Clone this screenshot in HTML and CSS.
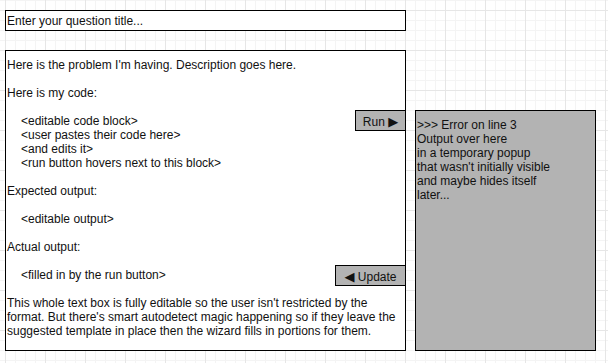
FILE: index.html
```html
<!DOCTYPE html>
<html lang="en">

<head>
  <meta charset="UTF-8">
  <meta name="viewport" content="width=device-width, initial-scale=1.0">
  <title>Question wizard</title>
  <link rel="stylesheet" href="styles.css">
</head>

<body>
  <div class="canvas">
    <div class="editor">
      <div class="title-box">Enter your question title...</div>

      <div class="question-box">
        <p class="block">Here is the problem I'm having. Description goes here.</p>
        <p class="block">Here is my code:</p>
        <div class="block indent">
          <p>&lt;editable code block&gt;</p>
          <p>&lt;user pastes their code here&gt;</p>
          <p>&lt;and edits it&gt;</p>
          <p>&lt;run button hovers next to this block&gt;</p>
        </div>
        <p class="block">Expected output:</p>
        <p class="block indent">&lt;editable output&gt;</p>
        <p class="block">Actual output:</p>
        <p class="block indent">&lt;filled in by the run button&gt;</p>
        <p class="block">This whole text box is fully editable so the user isn't restricted by the format. But there's
          smart autodetect magic happening so if they leave the suggested template in place then the wizard fills in
          portions for them.</p>

        <button class="btn" id="run-btn">Run <span class="arrow">&#9654;</span></button>
        <button class="btn" id="update-btn"><span class="arrow">&#9664;</span> Update</button>
      </div>
    </div>

    <div class="output-box">
      <p>&gt;&gt;&gt; Error on line 3</p>
      <p>Output over here</p>
      <p>in a temporary popup</p>
      <p>that wasn't initially visible</p>
      <p>and maybe hides itself</p>
      <p>later...</p>
    </div>
  </div>
</body>

</html>
```

FILE: styles.css
```css
body {
  margin: 0;
  font-family: "Liberation Sans", Arial, sans-serif;
  font-size: 12px;
  line-height: 14px;
  color: #111;
}

p {
  margin: 0;
}

.canvas {
  width: 608px;
  height: 363px;
  box-sizing: border-box;
  padding: 10px 0 0 5px;
  display: flex;
  gap: 9px;
  background-color: #fff;
  background-image:
    linear-gradient(to right, #e6e6e6 1px, transparent 1px),
    linear-gradient(to bottom, #e6e6e6 1px, transparent 1px),
    linear-gradient(to right, #f4f4f4 1px, transparent 1px),
    linear-gradient(to bottom, #f4f4f4 1px, transparent 1px);
  background-size: 40px 40px, 40px 40px, 10px 10px, 10px 10px;
  background-position: 5px 10px, 5px 10px, 5px 0, 5px 0;
}

.editor {
  width: 401px;
  display: flex;
  flex-direction: column;
  gap: 19px;
}

.title-box {
  height: 21px;
  box-sizing: border-box;
  border: 1px solid #000;
  background: #fff;
  padding: 1px 0 0 1px;
  line-height: 19px;
}

.question-box {
  position: relative;
  height: 301px;
  box-sizing: border-box;
  border: 1px solid #000;
  background: #fff;
  padding: 7px 3px 0 1px;
}

.block {
  margin-bottom: 14px;
}

.indent {
  padding-left: 14px;
}

.btn {
  position: absolute;
  right: -1px;
  height: 21px;
  box-sizing: border-box;
  border: 1px solid #000;
  background: #b3b3b3;
  padding: 1px 0 0;
  font-family: "Liberation Sans", Arial, sans-serif;
  font-size: 12px;
  line-height: 19px;
  color: #111;
}

.arrow {
  font-family: "DejaVu Sans", sans-serif;
  font-size: 13px;
}

#run-btn {
  top: 59px;
  width: 51px;
}

#update-btn {
  top: 214px;
  width: 71px;
}

.output-box {
  width: 181px;
  height: 241px;
  margin-top: 100px;
  box-sizing: border-box;
  border: 1px solid #000;
  background: #b3b3b3;
  padding: 7px 1px 0 1px;
}
```
